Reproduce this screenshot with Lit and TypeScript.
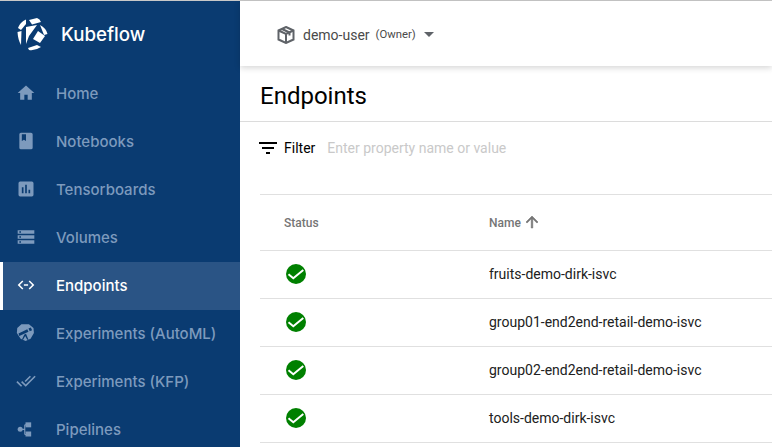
import { LitElement, html, css, svg } from "lit";
import { customElement } from "lit/decorators.js";

const navItems = [
  { label: "Home", icon: svg`<path d="M10 20v-6h4v6h5v-8h3L12 3 2 12h3v8z"/>` },
  { label: "Notebooks", icon: svg`<path fill-rule="evenodd" d="M6 2h12a2 2 0 0 1 2 2v16a2 2 0 0 1-2 2H6a2 2 0 0 1-2-2V4a2 2 0 0 1 2-2zm1 2v8l2.500-1.500L12 12V4z"/>` },
  { label: "Tensorboards", icon: svg`<path fill-rule="evenodd" d="M5 3h14a2 2 0 0 1 2 2v14a2 2 0 0 1-2 2H5a2 2 0 0 1-2-2V5a2 2 0 0 1 2-2zm2 14h2v-7H7zm4 0h2V7h-2zm4 0h2v-4h-2z"/>` },
  { label: "Volumes", icon: svg`<path fill-rule="evenodd" d="M2 20h20v-4H2zm2-3h2v2H4zM2 4v4h20V4zm4 3H4V5h2zm-4 7h20v-4H2zm2-3h2v2H4z"/>` },
  { label: "Endpoints", active: true, icon: svg`<path d="M7.500 6.500 2 12l5.500 5.500 1.300-1.300L4.600 12l4.200-4.200zM16.500 6.500l-1.300 1.300 4.200 4.200-4.200 4.200 1.300 1.300L22 12zM9.500 11h5v2h-5z"/>` },
  { label: "Experiments (AutoML)", icon: svg`<path fill-rule="evenodd" d="M6.500 1.500h9l5.500 4.500.5 6-4 7-6 2.500-6-2.500-4.500-7 .5-6zM3 12.500l1 3L15 10.500l-1.500-3zM15 6.500l1.500 3.500 2.800-1.200-1.500-3.500zM10 13.800 7 20h1.500l2.500-4.300L13.500 20H15l-3-7z"/>` },
  { label: "Experiments (KFP)", icon: svg`<path d="M18 7l-1.410-1.410-6.340 6.340 1.410 1.410L18 7zm4.240-1.410L11.660 16.170 7.480 12l-1.410 1.410L11.660 19l12-12-1.420-1.410zM.41 13.410L6 19l1.410-1.410L1.830 12 .41 13.410z"/>` },
  { label: "Pipelines", icon: svg`<circle cx="5" cy="12.400" r="3"/><rect x="11.400" y="4" width="6.800" height="6"/><rect x="11.400" y="15" width="6.800" height="6"/><path d="M5 12.400h5.500M10.500 7v11.500M10.500 7h1.500M10.500 18.500h1.500" fill="none" stroke="currentColor" stroke-width="1.300"/>` },
];

@customElement("app-root")
export class AppRoot extends LitElement {
  static styles = css`
    :host {
      display: block;
      height: 447px;
      overflow: hidden;
      background: #fff;
      font-family: Roboto, sans-serif;
    }
    .shell {
      display: flex;
      height: 447px;
      border-top: 1px solid #c8c8c8;
      box-sizing: border-box;
    }
    .side {
      flex: 0 0 240px;
      background: #0a3b71;
      overflow: hidden;
    }
    .brand {
      display: flex;
      align-items: center;
      height: 69px;
      box-sizing: border-box;
      padding: 0 0 3px 17px;
      gap: 13px;
      color: #fff;
      font: 500 18.7px Inter, sans-serif;
    }
    .nav-item {
      display: flex;
      align-items: center;
      height: 48px;
      box-sizing: border-box;
      padding: 0 0 2px 16px;
      gap: 20px;
      color: #7d9abd;
      font: 500 15px Inter, sans-serif;
      white-space: nowrap;
    }
    .nav-item svg {
      width: 20px;
      height: 20px;
      fill: currentColor;
      flex: none;
    }
    .nav-item.active {
      background: #2a5485;
      color: #fff;
      border-left: 3px solid #fff;
      padding-left: 13px;
    }
    .main {
      flex: 1;
      min-width: 0;
    }
    .top {
      display: flex;
      align-items: center;
      height: 65px;
      box-sizing: border-box;
      padding: 2px 0 0 37px;
      gap: 8px;
      box-shadow: 0 2px 6px rgba(0, 0, 0, 0.16);
      color: #4a4a4a;
      font-size: 14px;
    }
    .top .cube {
      width: 18px;
      height: 18px;
    }
    .owner {
      font-size: 11.3px;
      margin-left: -2px;
    }
    .caret {
      width: 0;
      height: 0;
      border: 5px solid transparent;
      border-top-color: #5f6368;
      border-bottom: 0;
    }
    h1 {
      margin: 0;
      height: 56px;
      padding: 5px 0 0 20px;
      box-sizing: border-box;
      border-bottom: 1px solid #dcdcdc;
      display: flex;
      align-items: center;
      font-size: 24px;
      font-weight: 400;
      color: #000;
    }
    .filter {
      display: flex;
      align-items: center;
      height: 52px;
      padding-left: 19px;
      font-size: 14px;
      color: #000;
    }
    .filter svg {
      width: 18px;
      height: 12px;
      margin-right: 7px;
    }
    .filter .hint {
      margin-left: 12px;
      color: #c9c9c9;
    }
    .table {
      margin: 20px 0 0 20px;
      border-top: 1px solid #e0e0e0;
      font-size: 14px;
      color: #212121;
    }
    .row {
      display: grid;
      grid-template-columns: 205px 1fr;
      align-items: center;
      height: 48px;
      border-bottom: 1px solid #e0e0e0;
      box-sizing: border-box;
      padding-left: 24px;
    }
    .row .cell {
      margin-bottom: 2px;
    }
    .row.head {
      height: 56px;
      font-size: 12px;
      font-weight: 500;
      color: #757575;
    }
    .name-head {
      display: flex;
      align-items: center;
      gap: 2px;
    }
    .name-head svg {
      width: 18px;
      height: 18px;
      fill: #757575;
      stroke: #757575;
      stroke-width: 0.8;
      margin-top: -2px;
    }
    .ok {
      width: 20px;
      height: 20px;
      display: block;
      margin: 0 0 1px 2px;
    }
  `;

  render() {
    const rows = [
      "fruits-demo-dirk-isvc",
      "group01-end2end-retail-demo-isvc",
      "group02-end2end-retail-demo-isvc",
      "tools-demo-dirk-isvc",
    ];
    return html`
      <div class="shell">
        <aside class="side">
          <div class="brand">
            <svg width="31" height="33" viewBox="0 0 31 33" fill="#fff">
              <path d="M1 10Q3 4 9 1.500L9 6 4 12z" />
              <path d="M12 2 20 0Q23 1 24 4L15 6.500z" />
              <path d="M.5 14 4.500 13 4 27Q1 22 .5 14z" />
              <path d="M9 9 20 7 12 18 9 26z" />
              <path d="M23 7Q29 10 30.500 16L27 17z" />
              <path d="M21 13 28 18 23 25 16 21z" />
              <path d="M11 30 20 27 24 29Q18 33 12 32z" />
            </svg>
            <span>Kubeflow</span>
          </div>
          ${navItems.map(
            (n) => html`<div class="nav-item ${n.active ? "active" : ""}">
              <svg viewBox="0 0 24 24">${n.icon}</svg><span>${n.label}</span>
            </div>`
          )}
        </aside>
        <main class="main">
          <div class="top">
            <svg class="cube" viewBox="0 0 18 18" fill="none" stroke="#5f6368" stroke-width="2">
              <path d="M9 1l7.500 3.500v9L9 17l-7.500-3.500v-9z" />
              <path d="M1.500 4.500 9 8l7.500-3.500M9 8v9" />
              <path d="M5 3l7.500 3.500v3" />
            </svg>
            <span>demo-user</span>
            <span class="owner">(Owner)</span>
            <span class="caret"></span>
          </div>
          <h1>Endpoints</h1>
          <div class="filter">
            <svg viewBox="0 0 18 12" fill="#000"><path d="M0 0h18v2H0zM3 5h12v2H3zM7 10h4v2H7z" /></svg>
            <span>Filter</span>
            <span class="hint">Enter property name or value</span>
          </div>
          <div class="table">
            <div class="row head">
              <span>Status</span>
              <span class="name-head">Name
                <svg viewBox="0 0 24 24"><path d="M4 12l1.400 1.400L11 7.800V20h2V7.800l5.600 5.600L20 12l-8-8z" /></svg>
              </span>
            </div>
            ${rows.map(
              (r) => html`<div class="row">
                <svg class="ok" viewBox="0 0 20 20">
                  <circle cx="10" cy="10" r="10" fill="#008000" />
                  <path d="M2.500 10.300 7.300 14.300 17.300 6" fill="none" stroke="#fff" stroke-width="2" />
                </svg>
                <span class="cell">${r}</span>
              </div>`
            )}
          </div>
        </main>
      </div>
    `;
  }
}
